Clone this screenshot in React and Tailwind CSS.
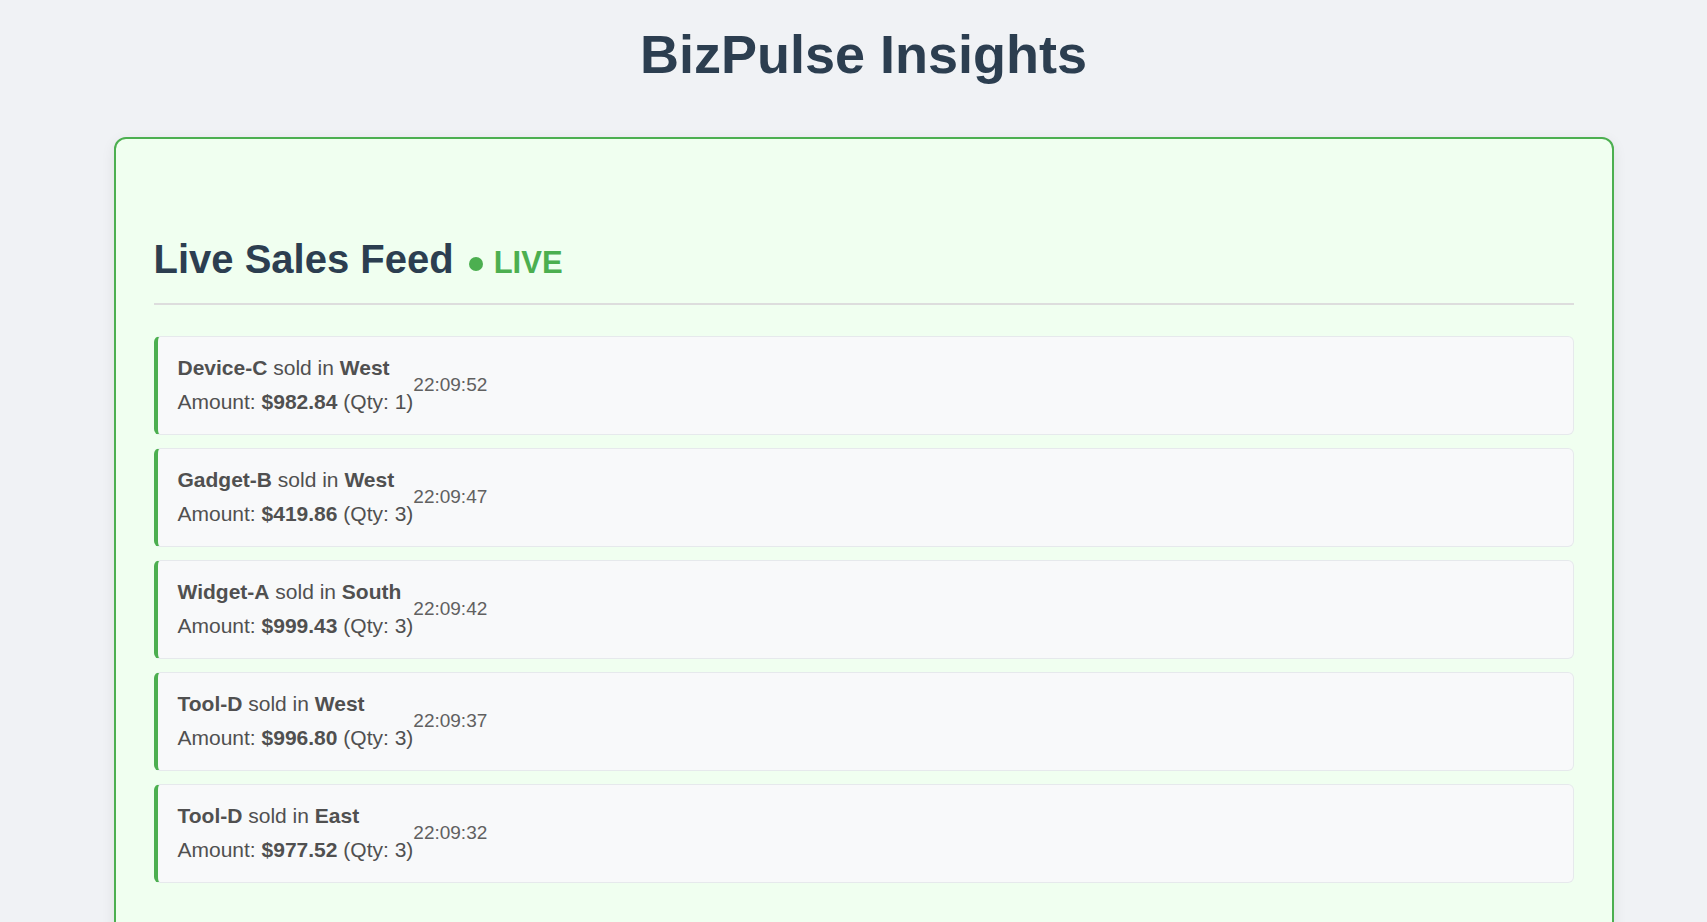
import React from "react";

const sales = [
  { product: "Device-C", region: "West", amount: "$982.84", qty: 1, time: "22:09:52" },
  { product: "Gadget-B", region: "West", amount: "$419.86", qty: 3, time: "22:09:47" },
  { product: "Widget-A", region: "South", amount: "$999.43", qty: 3, time: "22:09:42" },
  { product: "Tool-D", region: "West", amount: "$996.80", qty: 3, time: "22:09:37" },
  { product: "Tool-D", region: "East", amount: "$977.52", qty: 3, time: "22:09:32" },
];

export default function App() {
  return (
    <div className="min-h-screen bg-[#f0f2f5] pl-[20px] pt-[24px] font-['Liberation_Sans',Arial,sans-serif]">
      {/* Header */}
      <h1 className="text-center text-[54px] leading-[61px] font-bold text-[#2c3e50] mb-[52px]">
        BizPulse Insights
      </h1>

      {/* Live feed card */}
      <div className="max-w-[1500px] mx-auto bg-[#f0fff0] border-2 border-[#4caf50] rounded-xl shadow-[0_4px_14px_rgba(0,0,0,0.08)] px-[38px] pt-[97px] pb-[60px]">
        <h2 className="text-[40px] leading-[46px] font-bold text-[#2c3e50] pb-[17px] border-b-2 border-[#ddd]">
          Live Sales Feed
          <span className="inline-block ml-[15px] mb-[2px] w-[14px] h-[14px] rounded-full bg-[#4caf50]"></span>
          <span className="ml-[11px] text-[31px] text-[#4caf50]">LIVE</span>
        </h2>

        <div className="mt-[31px]">
          {sales.map((sale, index) => (
            <div
              key={index}
              className="flex items-center bg-[#f8f9fa] border border-[#e6e9ec] border-l-4 border-l-[#4caf50] rounded-md pl-[20px] pt-[14px] pb-[15px] mb-[13px]"
            >
              <div className="text-[21px] leading-[34px] text-[#505050]">
                <div>
                  <strong>{sale.product}</strong> sold in <strong>{sale.region}</strong>
                </div>
                <div>
                  Amount: <strong>{sale.amount}</strong> (Qty: {sale.qty})
                </div>
              </div>
              <span className="text-[19px] text-[#606060]">{sale.time}</span>
            </div>
          ))}
        </div>
      </div>
    </div>
  );
}
